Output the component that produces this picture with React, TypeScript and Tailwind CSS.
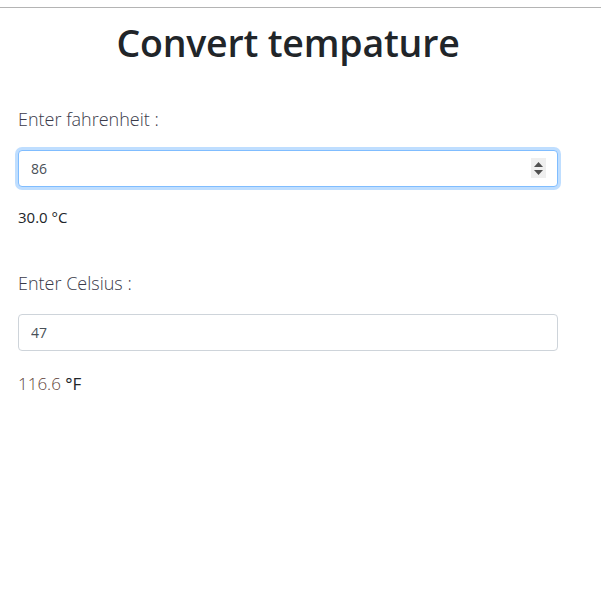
import { useState } from "react";

const App = () => {
  const [fahrenheit, setFahrenheit] = useState("86");
  const [celsius, setCelsius] = useState("47");

  const toC = ((parseFloat(fahrenheit) - 32) * 5) / 9;
  const toF = (parseFloat(celsius) * 9) / 5 + 32;

  return (
    <div className="min-h-screen bg-white text-[#212529] font-['Open_Sans',sans-serif]">
      <div className="pt-[7px]">
        <div className="border-t border-[#b4b4b4]"></div>
      </div>
      <div className="w-[540px] ml-[18px]">
        {/* Heading */}
        <h1 className="text-center text-[37.5px] font-semibold leading-[48px] mt-[11px] tracking-[-0.2px]">
          Convert tempature
        </h1>

        {/* Fahrenheit */}
        <div className="mt-[40px]">
          <label className="block text-[18px] font-light leading-[24px] text-[#3a3a4a]">
            Enter fahrenheit :
          </label>
          <div className="relative mt-[19px]">
            <input
              type="text"
              value={fahrenheit}
              onChange={(e) => setFahrenheit(e.target.value)}
              className="block w-full h-[37px] px-[12px] text-[14px] text-[#495057] bg-white border border-[#80bdff] rounded-[4px] outline-none shadow-[0_0_0_3px_rgba(0,123,255,0.25)]"
            />
            {/* spinner */}
            <div className="absolute right-[12px] top-[8px] w-[15px] h-[20px] bg-[#efefef] flex flex-col items-center justify-center gap-[3px]">
              <svg width="9" height="5" viewBox="0 0 9 5">
                <polygon points="4.5,0 9,5 0,5" fill="#505050" />
              </svg>
              <svg width="9" height="5" viewBox="0 0 9 5">
                <polygon points="0,0 9,0 4.5,5" fill="#505050" />
              </svg>
            </div>
          </div>
          <p className="mt-[20px] text-[15px] leading-[20px]">
            {isNaN(toC) ? "" : toC.toFixed(1)} °C
          </p>
        </div>

        {/* Celsius */}
        <div className="mt-[44px]">
          <label className="block text-[18px] font-light leading-[24px] text-[#3a3a4a]">
            Enter Celsius :
          </label>
          <input
            type="text"
            value={celsius}
            onChange={(e) => setCelsius(e.target.value)}
            className="block w-full h-[37px] mt-[19px] px-[12px] text-[14px] text-[#495057] bg-white border border-[#ced4da] rounded-[4px] outline-none"
          />
          <p className="mt-[21px] text-[17px] leading-[24px]">
            <span className="font-light text-[#5e3f38]">
              {isNaN(toF) ? "" : toF.toFixed(1)}
            </span>{" "}
            °F
          </p>
        </div>
      </div>
    </div>
  );
};

export default App;
